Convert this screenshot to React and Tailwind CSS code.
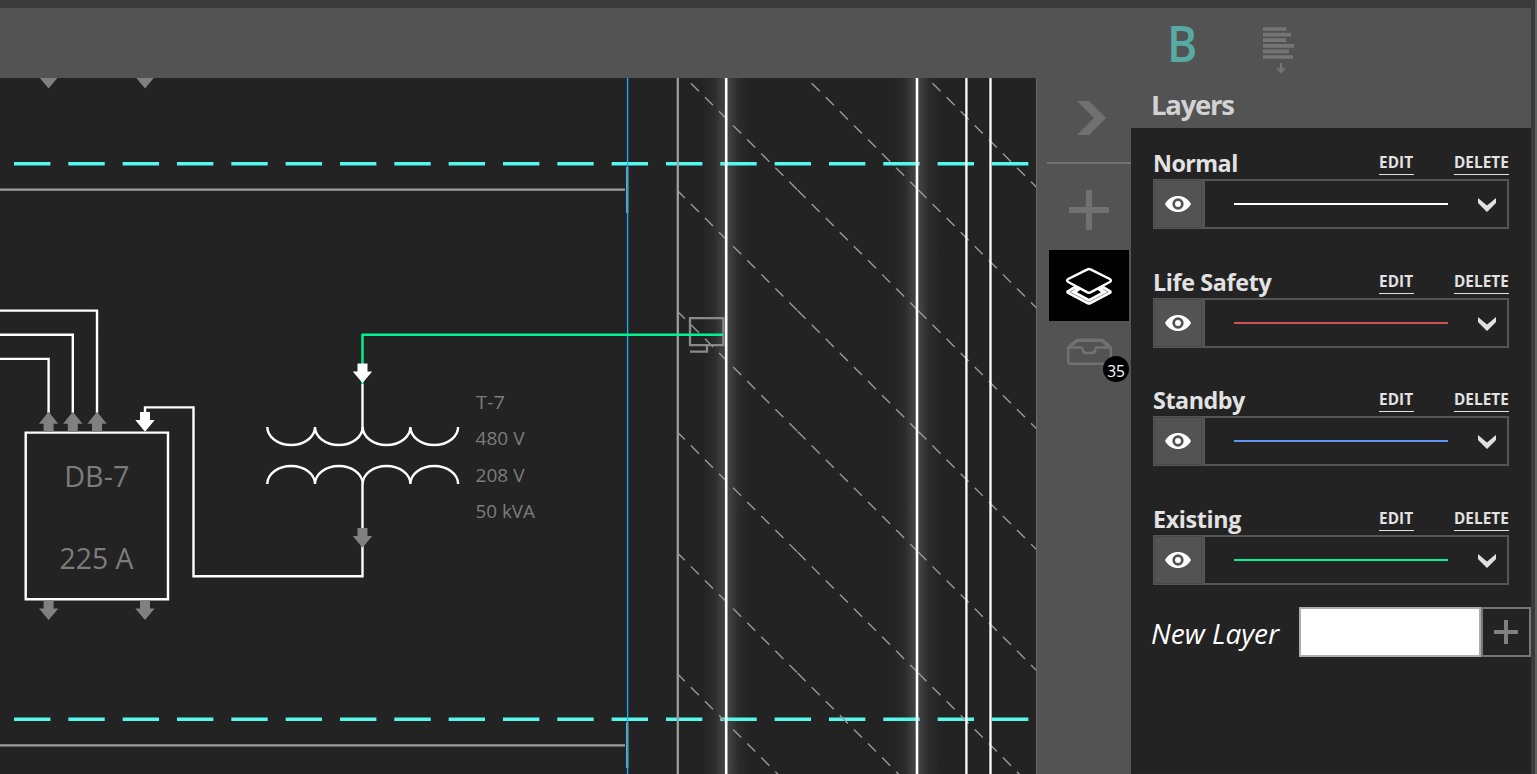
import React from "react";

const layers = [
  { name: "Normal", line: "bg-white", title: "tracking-[-0.55px]", row: "h-[119px]" },
  { name: "Life Safety", line: "bg-[#cd5654]", title: "tracking-[-0.35px]", row: "h-[118px]" },
  { name: "Standby", line: "bg-[#6495ed]", title: "tracking-[-0.45px]", row: "h-[119px]" },
  { name: "Existing", line: "bg-[#00f58e]", title: "tracking-[-0.35px]", row: "h-[72px]" },
];

const TILE = 120.8;
const hatch = [];
for (let i = 0; i < 3; i++) {
  for (let j = -1; j < 6; j++) {
    hatch.push([677.3 + i * TILE - 0.5, 69.6 + j * TILE - 0.5]);
  }
}

function DownArrow({ x, y, fill = "#808080" }) {
  return <path transform={`translate(${x} ${y})`} d="M-5 0H5V8H9.7L0 19.7L-9.7 8H-5Z" fill={fill} />;
}

function UpArrow({ x, y }) {
  return <path transform={`translate(${x} ${y})`} d="M0 0L9.7 12H5V20H-5V12H-9.7Z" fill="#808080" />;
}

function Label({ x, y, size, width, children }) {
  return (
    <text x={x} y={y} fontSize={size} textLength={width} lengthAdjust="spacingAndGlyphs" fill="#7c7c7c">
      {children}
    </text>
  );
}

function Diagram() {
  return (
    <svg width="1036" height="696" viewBox="0 78 1036 696" className="block shrink-0 bg-[#232323] font-['Open_Sans',sans-serif]">
      <defs>
        <linearGradient id="glow">
          <stop offset="0" stopColor="#fff" stopOpacity="0" />
          <stop offset="0.25" stopColor="#fff" stopOpacity="0.04" />
          <stop offset="0.42" stopColor="#fff" stopOpacity="0.13" />
          <stop offset="0.58" stopColor="#fff" stopOpacity="0.13" />
          <stop offset="0.75" stopColor="#fff" stopOpacity="0.04" />
          <stop offset="1" stopColor="#fff" stopOpacity="0" />
        </linearGradient>
        <clipPath id="wall">
          <rect x="678" y="78" width="358" height="696" />
        </clipPath>
      </defs>
      <rect x="702" y="78" width="48" height="696" fill="url(#glow)" />
      <rect x="893" y="78" width="48" height="696" fill="url(#glow)" />

      <g stroke="#56f8ee" strokeWidth="3.6" strokeDasharray="36.4 17.93">
        <path d="M14 163.8H1030" />
        <path d="M14 719.3H1030" />
      </g>
      <g stroke="#a09d9f" strokeWidth="2.3" fill="none">
        <path d="M0 189.7H625M627.2 167V213" />
        <path d="M0 745.3H625M627.2 722.5V768" />
        <path d="M677.8 78V774" />
      </g>
      <g stroke="#9a989a" strokeWidth="1.4" strokeDasharray="11.4 8.51" clipPath="url(#wall)">
        {hatch.map(([x, y]) => (
          <line key={`${x}-${y}`} x1={x} y1={y} x2={x + TILE - 0.5} y2={y + TILE - 0.5} />
        ))}
      </g>
      <path d="M726.2 78V774M917 78V774" stroke="#fff" strokeWidth="2.6" />
      <path d="M966.4 78V774M990.5 78V774" stroke="#fff" strokeWidth="2.3" />
      <path d="M690 318.2H723.4V345.2H690ZM707 346V351.6H690" fill="none" stroke="#8a8a8a" strokeWidth="2.3" />
      <path d="M627.6 78V774" stroke="#0cb4f6" strokeWidth="1.3" />

      <g fill="none" stroke="#fff" strokeWidth="2.4">
        <path d="M0 310.6H97V413M0 334.7H72.8V413M0 358.9H48.6V413" />
        <path d="M145 414V407.4H193.5V576.2H362.5V484" />
        <path d="M362.5 384V430" />
        <path d="M25.7 432.6H168V599.3H25.7Z" />
        <path d="M267.3 427a23.85 18 0 0 0 47.7 0a23.85 18 0 0 0 47.7 0a23.85 18 0 0 0 47.7 0a23.85 18 0 0 0 47.7 0" />
        <path d="M267.3 484a23.85 18 0 0 1 47.7 0a23.85 18 0 0 1 47.7 0a23.85 18 0 0 1 47.7 0a23.85 18 0 0 1 47.7 0" />
      </g>
      <path d="M723 334.8H362.5V384" fill="none" stroke="#00f58e" strokeWidth="2.4" />

      <UpArrow x={48.6} y={411.8} />
      <UpArrow x={72.8} y={411.8} />
      <UpArrow x={97} y={411.8} />
      <DownArrow x={145} y={412} fill="#fff" />
      <DownArrow x={48.6} y={600.4} />
      <DownArrow x={145} y={600.4} />
      <DownArrow x={48.6} y={68.8} />
      <DownArrow x={145} y={68.8} />
      <DownArrow x={362.5} y={363.4} fill="#fff" />
      <DownArrow x={362.5} y={528} />

      <Label x={64.3} y={486.6} size={29} width={65}>DB-7</Label>
      <Label x={59.5} y={568.8} size={29} width={74}>225 A</Label>
      <Label x={476} y={409.2} size={18.5} width={28.8}>T-7</Label>
      <Label x={475.5} y={445.4} size={18.5} width={49}>480 V</Label>
      <Label x={475.5} y={481.6} size={18.5} width={49}>208 V</Label>
      <Label x={475.5} y={518} size={18.5} width={59.5}>50 kVA</Label>
    </svg>
  );
}

function LayersIcon() {
  return (
    <svg width="48" height="40" viewBox="1065 265 48 40" fill="none" strokeLinejoin="round">
      <path d="M1087 303.3Q1089 304.300 1091 303.3L1110.800 292.800Q1112.800 291 1110.800 289.200L1103 284.500H1075L1067.200 289.200Q1065.200 291 1067.200 292.800Z" fill="#fff" />
      <path d="M1089 297.800L1077 291.200L1083 287H1095L1101 291.200Z" fill="#000" />
      <path d="M1075 288L1069.800 291L1089 301L1108.200 291L1103 288" stroke="#777" strokeWidth="0.7" />
      <path d="M1087 268.7Q1089 267.500 1091 268.7L1109.800 278Q1112 279.500 1109.800 281L1091 291.200Q1089 292.400 1087 291.200L1068.200 281Q1066 279.500 1068.200 278Z" fill="#000" stroke="#fff" strokeWidth="2.5" />
    </svg>
  );
}

function TrayIcon() {
  return (
    <svg width="48" height="30" viewBox="1065 337 48 30" fill="none" stroke="#717171" strokeWidth="2.4" strokeLinejoin="round">
      <path d="M1068.200 347.500H1081Q1082.500 347.500 1082.500 349.500Q1083 353 1086.500 353H1091.500Q1095 353 1095.500 349.500Q1095.500 347.500 1097 347.500H1110.800V361.500Q1110.800 363.800 1108.500 363.800H1070.500Q1068.200 363.800 1068.200 361.500Z" />
      <path d="M1069.500 346.500L1077.200 340.300H1102L1109.500 346.500" strokeWidth="3.600" />
    </svg>
  );
}

function EyeIcon() {
  return (
    <svg width="26" height="16" viewBox="0 0 26 16">
      <path d="M0 8C3 2.500 8 0 13 0S23 2.500 26 8C23 13.500 18 16 13 16S3 13.500 0 8Z" fill="#fff" />
      <circle cx="13" cy="8" r="4.300" fill="#fff" stroke="#535353" strokeWidth="2.700" />
    </svg>
  );
}

function LayerRow({ layer }) {
  return (
    <div className={`pl-[22px] ${layer.row}`}>
      <div className="flex h-[28px] w-[356px] items-start text-[#e2e2e2] font-bold">
        <span className={`grow whitespace-nowrap text-[23.3px] leading-[24px] ${layer.title}`}>{layer.name}</span>
        <button className="mt-[3px] h-[21px] w-[35px] whitespace-nowrap border-b border-[#e2e2e2] pb-[3px] text-left text-[15.3px] leading-[15px] font-bold tracking-[0.1px]">EDIT</button>
        <button className="mt-[3px] ml-[40px] h-[21px] w-[55px] whitespace-nowrap border-b border-[#e2e2e2] pb-[3px] text-left text-[15.3px] leading-[15px] font-bold tracking-[0.05px]">DELETE</button>
      </div>
      <div className="flex h-[50px] w-[356px] border-2 border-[#555555]">
        <div className="flex w-[50px] shrink-0 border-r-2 border-[#555555] bg-[#535353]">
          <div className="-ml-px -mt-px flex h-[48px] w-[48px] items-center justify-center border border-[#494949]">
            <EyeIcon />
          </div>
        </div>
        <div className="flex grow items-center pl-[29px] pr-[11px]">
          <div className={`h-[2px] w-[214px] ${layer.line}`} />
          <svg className="ml-auto mt-[2px]" width="18" height="14" viewBox="0 0 18 14">
            <path d="M0 0L9 7.500L18 0V5L9 14L0 5Z" fill="#e0e0e0" />
          </svg>
        </div>
      </div>
    </div>
  );
}

function ToolRail() {
  return (
    <div className="flex w-[95px] shrink-0 flex-col items-end border-l border-[#6a6a6a] bg-[#535353]">
      <svg className="mr-[25px] mt-[23px] shrink-0" width="29" height="34" viewBox="0 0 29 34">
        <path d="M0 0H12L29 17L12 34H0L17 17Z" fill="#717171" />
      </svg>
      <div className="mt-[27px] h-[2px] w-[84px] shrink-0 bg-[#727272]" />
      <svg className="mr-[22px] mt-[26px] shrink-0" width="40" height="40" viewBox="0 0 40 40">
        <path d="M0 20H40M20 0V40" stroke="#717171" strokeWidth="6.200" />
      </svg>
      <div className="mr-[2px] mt-[20px] flex h-[71px] w-[80px] shrink-0 items-center justify-center bg-black">
        <LayersIcon />
      </div>
      <div className="relative mr-[2px] mt-[16px] flex h-[46px] w-[80px] shrink-0 items-start justify-center">
        <TrayIcon />
        <span className="absolute right-0 top-[19px] flex h-[26px] w-[26px] items-center justify-center rounded-full bg-black pt-[3px] text-[15.500px] leading-[20px] text-white">35</span>
      </div>
    </div>
  );
}

function LayersPanel() {
  return (
    <div className="flex w-[400px] shrink-0 flex-col border-b border-[#2a2226] bg-[#232323]">
      <h2 className="h-[50px] shrink-0 bg-[#535353] pl-[20px] text-[27.500px] leading-[53px] font-bold tracking-[-1.250px] text-[#d2d2d2]">Layers</h2>
      <div className="h-[23px] shrink-0" />
      {layers.map((layer) => (
        <LayerRow key={layer.name} layer={layer} />
      ))}
      <div className="mt-[28px] flex h-[51px] shrink-0 pl-[20px]">
        <label className="w-[148px] whitespace-nowrap text-[28px] leading-[53px] text-white italic">New Layer</label>
        <div className="h-[50px] w-[182px] border-2 border-[#aeacb0] bg-white" />
        <button className="flex h-[50px] w-[50px] items-center justify-center border-2 border-[#777777]">
          <svg width="24" height="24" viewBox="0 0 24 24">
            <path d="M0 12H24M12 0V24" stroke="#808080" strokeWidth="4" />
          </svg>
        </button>
      </div>
    </div>
  );
}

export default function App() {
  return (
    <div className="flex h-[774px] w-[1537px] flex-col overflow-hidden bg-[#3a3a3a] pt-[8px] font-['Open_Sans',sans-serif]">
      <div className="flex h-[766px]">
        <main className="flex w-[1531px] shrink-0 flex-col">
          <header className="flex h-[70px] shrink-0 items-start bg-[#535353] pl-[1165px]">
            <span className="w-[98px] pl-[1.500px] text-[50px] leading-[70px] font-semibold text-[#56aaa4]">
              <span className="inline-block origin-left scale-x-[0.92]">B</span>
            </span>
            <svg className="mt-[18px]" width="32" height="48" viewBox="0 0 32 48">
              <path d="M0 3H23.500M0 8.700H28M0 14.200H23M0 19.800H31M0 25.300H26M0 31H30" stroke="#757575" strokeWidth="3.700" />
              <path d="M18 37V45.500M14.300 42L18 46L21.700 42" fill="none" stroke="#757575" strokeWidth="2" />
            </svg>
          </header>
          <div className="flex h-[696px]">
            <Diagram />
            <ToolRail />
            <LayersPanel />
          </div>
        </main>
        <div className="ml-[4px] -mt-[8px] h-[774px] w-[2px] shrink-0 bg-[#5f5f5f]" />
      </div>
    </div>
  );
}
